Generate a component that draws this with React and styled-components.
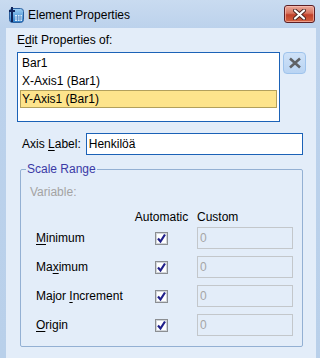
import React from 'react';
import styled, { createGlobalStyle } from 'styled-components';

const Global = createGlobalStyle`
  html, body { margin: 0; padding: 0; }
  body {
    width: 320px;
    height: 358px;
    overflow: hidden;
    background: #bcd2ec;
    font-family: "Liberation Sans", Arial, sans-serif;
    font-size: 12px;
    color: #000;
  }
`;

const Window = styled.div`
  width: 320px;
  height: 358px;
  display: flex;
  flex-direction: column;
  background: linear-gradient(#c9dbf0 0px, #bcd2ec 28px, #b9d0ea 100%);
`;

const TitleBar = styled.div`
  height: 28px;
  flex: none;
  display: flex;
  align-items: center;
  padding: 0 5px 0 8px;
  box-sizing: border-box;
  gap: 4px;
`;

const Title = styled.div`
  flex: 1;
  font-size: 12px;
  line-height: 14px;
  padding-top: 1px;
`;

const CloseButton = styled.div`
  width: 31px;
  height: 18px;
  box-sizing: border-box;
  border: 1px solid #5b1f25;
  border-radius: 3px;
  background: linear-gradient(#e9a89a 0%, #d87560 45%, #c0402a 55%, #d2623f 100%);
  box-shadow: inset 0 0 0 1px rgba(255, 200, 190, 0.6);
  display: flex;
  align-items: center;
  justify-content: center;
`;

const Body = styled.div`
  flex: 1;
  margin: 0 4px 0 6px;
  background: #e3edf9;
  padding: 5px 0 0 11px;
  display: flex;
  flex-direction: column;
`;

const Label = styled.div`
  line-height: 14px;
  margin-bottom: 5px;
`;

const Key = styled.span`
  text-decoration: underline;
  text-underline-offset: 2px;
`;

const ListRow = styled.div`
  display: flex;
  align-items: flex-start;
`;

const List = styled.div`
  width: 263px;
  height: 70px;
  box-sizing: border-box;
  border: 1px solid #1b62b7;
  background: #fff;
  padding: 1px 2px;
`;

const ListItem = styled.div`
  height: 18px;
  box-sizing: border-box;
  line-height: 16px;
  padding-left: 1px;
  border: 1px solid ${({ $selected }) => ($selected ? '#b2a05c' : 'transparent')};
  background: ${({ $selected }) => ($selected ? '#fde48c' : 'transparent')};
`;

const DeleteButton = styled.div`
  width: 23px;
  height: 22px;
  margin-left: 3px;
  box-sizing: border-box;
  border: 1px solid #9ec3ec;
  border-radius: 4px;
  background: linear-gradient(#cfe2f8, #b9d4f3);
  display: flex;
  align-items: center;
  justify-content: center;
`;

const FieldRow = styled.div`
  display: flex;
  align-items: center;
  gap: 5px;
  margin: 11px 0 0 5px;
`;

const TextInput = styled.div`
  width: 217px;
  height: 22px;
  box-sizing: border-box;
  border: 1px solid #1b62b7;
  background: #fff;
  padding-left: 2px;
  line-height: 20px;
`;

const Group = styled.fieldset`
  width: 283px;
  box-sizing: border-box;
  margin: 7px 0 0 3px;
  padding: 0 0 10px 9px;
  border: 1px solid #93b0d3;
  border-radius: 2px;
`;

const Legend = styled.legend`
  color: #3a3aa6;
  line-height: 14px;
  padding: 0 1px;
  margin-left: -4px;
`;

const Muted = styled.div`
  color: #a3a3a3;
  line-height: 14px;
  margin-top: 9px;
`;

const Grid = styled.div`
  display: grid;
  grid-template-columns: 90px 55px 96px;
  column-gap: 8px;
  row-gap: 7px;
  margin: 11px 0 0 6px;
  align-items: center;
`;

const Head = styled.div`
  line-height: 14px;
  text-align: ${({ $center }) => ($center ? 'center' : 'left')};
  margin-bottom: -4px;
`;

const RowLabel = styled.div`
  line-height: 14px;
  white-space: nowrap;
`;

const CheckCell = styled.div`
  display: flex;
  justify-content: center;
`;

const DisabledInput = styled.div`
  height: 22px;
  box-sizing: border-box;
  border: 1px solid #c3c7cb;
  padding-left: 2px;
  line-height: 20px;
  color: #a6a6a6;
`;

const AppIcon = () => (
  <svg width="16" height="17" viewBox="0 0 16 17">
    <defs>
      <linearGradient id="ig" x1="0" y1="0" x2="0" y2="1">
        <stop offset="0" stopColor="#9fd0f4" />
        <stop offset="1" stopColor="#2a7cc8" />
      </linearGradient>
    </defs>
    <rect x="1.5" y="2.5" width="14" height="14" rx="3" fill="url(#ig)" stroke="#2b5f9e" />
    <rect x="7" y="9" width="7" height="6" fill="#d9ecfb" />
    <path d="M7 11h7M7 13h7M9.5 9v6M12 9v6" stroke="#4d87c4" strokeWidth="0.8" />
    <path d="M4 1v15" stroke="#10245a" strokeWidth="2" />
    <path d="M1 5h6" stroke="#10245a" strokeWidth="2" />
  </svg>
);

const CloseGlyph = () => (
  <svg width="13" height="11" viewBox="0 0 13 11">
    <path d="M2 1.5l9 8M11 1.5l-9 8" stroke="#4a2420" strokeWidth="4" strokeLinecap="round" />
    <path d="M2 1.5l9 8M11 1.5l-9 8" stroke="#fff" strokeWidth="2.2" strokeLinecap="round" />
  </svg>
);

const DeleteGlyph = () => (
  <svg width="14" height="12" viewBox="0 0 14 12">
    <path d="M2 1.5l10 9M12 1.5l-10 9" stroke="#5f6266" strokeWidth="2.6" />
  </svg>
);

const Check = () => (
  <svg width="13" height="13" viewBox="0 0 13 13">
    <rect x="0.5" y="0.5" width="12" height="12" fill="#f4f4f4" stroke="#8b8e92" />
    <rect x="1.5" y="1.5" width="10" height="10" fill="#fff" stroke="#d2d6da" />
    <path d="M3 6.5l2.5 3L10 2.5" fill="none" stroke="#1f1f8a" strokeWidth="2.2" />
  </svg>
);

const rows = [
  { text: 'inimum', key: 'M', before: '' },
  { text: 'imum', key: 'x', before: 'Ma' },
  { text: 'ncrement', key: 'I', before: 'Major ' },
  { text: 'rigin', key: 'O', before: '' },
];

export default function App() {
  return (
    <Window>
      <Global />
      <TitleBar>
        <AppIcon />
        <Title>Element Properties</Title>
        <CloseButton>
          <CloseGlyph />
        </CloseButton>
      </TitleBar>
      <Body>
        <Label>
          E<Key>d</Key>it Properties of:
        </Label>
        <ListRow>
          <List>
            <ListItem>Bar1</ListItem>
            <ListItem>X-Axis1 (Bar1)</ListItem>
            <ListItem $selected>Y-Axis1 (Bar1)</ListItem>
          </List>
          <DeleteButton>
            <DeleteGlyph />
          </DeleteButton>
        </ListRow>
        <FieldRow>
          <span>
            Axis <Key>L</Key>abel:
          </span>
          <TextInput>Henkilöä</TextInput>
        </FieldRow>
        <Group>
          <Legend>Scale Range</Legend>
          <Muted>Variable:</Muted>
          <Grid>
            <span />
            <Head $center>Automatic</Head>
            <Head>Custom</Head>
            {rows.map((r) => (
              <React.Fragment key={r.text}>
                <RowLabel>
                  {r.before}
                  <Key>{r.key}</Key>
                  {r.text}
                </RowLabel>
                <CheckCell>
                  <Check />
                </CheckCell>
                <DisabledInput>0</DisabledInput>
              </React.Fragment>
            ))}
          </Grid>
        </Group>
      </Body>
    </Window>
  );
}
